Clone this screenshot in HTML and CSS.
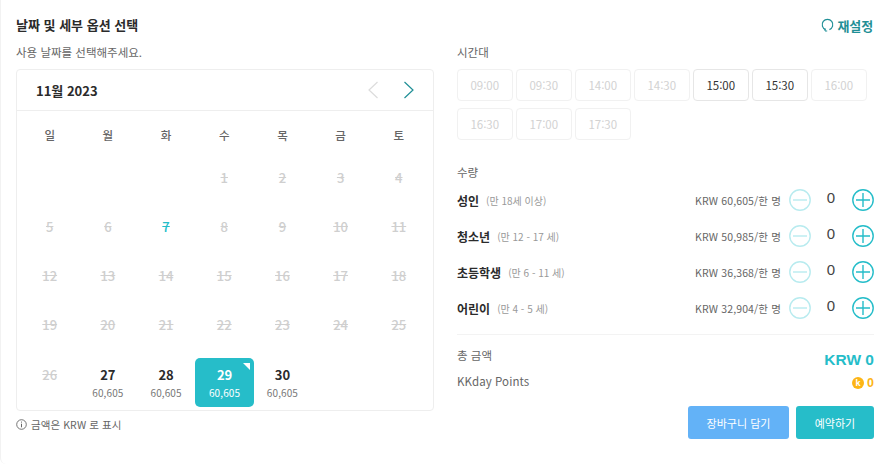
FILE: index.html
```html
<!DOCTYPE html>
<html lang="ko">
<head>
<meta charset="utf-8">
<title>날짜 및 세부 옵션 선택</title>
<link rel="stylesheet" href="styles.css">
</head>
<body>
<main class="panel">
  <header class="top">
    <h1 class="title">날짜 및 세부 옵션 선택</h1>
    <a class="reset">
      <svg width="13" height="14" viewBox="0 0 13 14"><path d="M4.600 11.600A5.300 5.300 0 1 1 8.400 11.600" fill="none" stroke="#1f8f96" stroke-width="1.200"/><path d="M4 10.400v2.600h2.200" fill="none" stroke="#1f8f96" stroke-width="1"/></svg>
      재설정
    </a>
  </header>
  <div class="columns">
    <section class="left">
      <p class="label">사용 날짜를 선택해주세요.</p>
      <div class="calendar">
        <div class="cal-head">
          <span class="month">11월 2023</span>
          <span class="nav">
            <svg width="12" height="18" viewBox="0 0 12 18"><path d="M10.500 1 2 9l8.500 8" fill="none" stroke="#dcdcdc" stroke-width="1.200"/></svg>
            <svg width="12" height="18" viewBox="0 0 12 18"><path d="M1.500 1 10 9l-8.500 8" fill="none" stroke="#1f8f96" stroke-width="1.200"/></svg>
          </span>
        </div>
        <div class="cal-grid">
          <div class="dow">일</div><div class="dow">월</div><div class="dow">화</div><div class="dow">수</div><div class="dow">목</div><div class="dow">금</div><div class="dow">토</div>
          <div class="day"></div><div class="day"></div><div class="day"></div>
          <div class="day off">1</div><div class="day off">2</div><div class="day off">3</div><div class="day off">4</div>
          <div class="day off">5</div><div class="day off">6</div><div class="day off today">7</div><div class="day off">8</div><div class="day off">9</div><div class="day off">10</div><div class="day off">11</div>
          <div class="day off">12</div><div class="day off">13</div><div class="day off">14</div><div class="day off">15</div><div class="day off">16</div><div class="day off">17</div><div class="day off">18</div>
          <div class="day off">19</div><div class="day off">20</div><div class="day off">21</div><div class="day off">22</div><div class="day off">23</div><div class="day off">24</div><div class="day off">25</div>
          <div class="day off">26</div>
          <div class="day on">27<small>60,605</small></div>
          <div class="day on">28<small>60,605</small></div>
          <div class="day on selected">29<small>60,605</small></div>
          <div class="day on">30<small>60,605</small></div>
        </div>
      </div>
      <p class="note">
        <svg width="11" height="11" viewBox="0 0 11 11"><circle cx="5.500" cy="5.500" r="4.800" fill="none" stroke="#666" stroke-width="0.900"/><path d="M5.500 4.700v3.600M5.500 2.600v1" stroke="#666" stroke-width="1"/></svg>
        금액은 KRW 로 표시
      </p>
    </section>
    <section class="right">
      <p class="label">시간대</p>
      <div class="times">
        <button class="time">09:00</button><button class="time">09:30</button><button class="time">14:00</button><button class="time">14:30</button><button class="time open">15:00</button><button class="time open">15:30</button><button class="time">16:00</button>
        <button class="time">16:30</button><button class="time">17:00</button><button class="time">17:30</button>
      </div>
      <p class="label qty-label">수량</p>
      <div class="rows">
        <div class="row"><span class="who">성인</span><span class="age">(만 18세 이상)</span><span class="price">KRW 60,605/한 명</span>
          <svg class="btn minus" viewBox="0 0 22 22"><circle cx="11" cy="11" r="10.200"/><path d="M4 11h14"/></svg><span class="count">0</span>
          <svg class="btn plus" viewBox="0 0 22 22"><circle cx="11" cy="11" r="10.200"/><path d="M4 11h14M11 4v14"/></svg></div>
        <div class="row"><span class="who">청소년</span><span class="age">(만 12 - 17 세)</span><span class="price">KRW 50,985/한 명</span>
          <svg class="btn minus" viewBox="0 0 22 22"><circle cx="11" cy="11" r="10.200"/><path d="M4 11h14"/></svg><span class="count">0</span>
          <svg class="btn plus" viewBox="0 0 22 22"><circle cx="11" cy="11" r="10.200"/><path d="M4 11h14M11 4v14"/></svg></div>
        <div class="row"><span class="who">초등학생</span><span class="age">(만 6 - 11 세)</span><span class="price">KRW 36,368/한 명</span>
          <svg class="btn minus" viewBox="0 0 22 22"><circle cx="11" cy="11" r="10.200"/><path d="M4 11h14"/></svg><span class="count">0</span>
          <svg class="btn plus" viewBox="0 0 22 22"><circle cx="11" cy="11" r="10.200"/><path d="M4 11h14M11 4v14"/></svg></div>
        <div class="row"><span class="who">어린이</span><span class="age">(만 4 - 5 세)</span><span class="price">KRW 32,904/한 명</span>
          <svg class="btn minus" viewBox="0 0 22 22"><circle cx="11" cy="11" r="10.200"/><path d="M4 11h14"/></svg><span class="count">0</span>
          <svg class="btn plus" viewBox="0 0 22 22"><circle cx="11" cy="11" r="10.200"/><path d="M4 11h14M11 4v14"/></svg></div>
      </div>
      <div class="totals">
        <div class="total-row"><span class="label-sm">총 금액</span><span class="amount">KRW 0</span></div>
        <div class="points-row"><span class="points-label">KKday Points</span><span class="points"><span class="coin">k</span>0</span></div>
      </div>
      <div class="actions">
        <button class="action cart">장바구니 담기</button>
        <button class="action book">예약하기</button>
      </div>
    </section>
  </div>
</main>
</body>
</html>
```
FILE: styles.css
```css
* { box-sizing: border-box; }
html, body { margin: 0; padding: 0; background: #fff; }
body {
  width: 886px;
  height: 464px;
  overflow: hidden;
  font-family: "Noto Sans CJK KR", "Noto Sans", sans-serif;
  color: #333;
}
p, h1 { margin: 0; }
.panel {
  height: 464px;
  padding: 15px 12px 0 15px;
  border-left: 1px solid #f2f2f2;
  border-radius: 0 0 0 6px;
}
.top {
  display: flex;
  justify-content: space-between;
  align-items: center;
  height: 20px;
}
.title { font-size: 13px; font-weight: 700; color: #2b2b2b; line-height: 20px; }
.reset {
  display: flex;
  align-items: center;
  gap: 3px;
  font-size: 13px;
  font-weight: 700;
  color: #1f8f96;
  padding-right: 1px;
  letter-spacing: -0.100px;
}
.columns { display: flex; gap: 23px; }
.left { width: 418px; flex: none; padding-top: 7px; }
.right { width: 417px; flex: none; padding-top: 7px; }
.label { font-size: 11.500px; line-height: 20px; color: #666; }
.calendar {
  margin-top: 7px;
  height: 342px;
  border: 1px solid #eee;
  border-radius: 4px;
}
.cal-head {
  height: 41px;
  border-bottom: 1px solid #eee;
  display: flex;
  align-items: center;
  justify-content: space-between;
  padding: 0 18px 0 19px;
}
.month { font-size: 13px; font-weight: 700; color: #2b2b2b; }
.nav { display: flex; gap: 24px; }
.nav svg { display: block; }
.cal-grid {
  display: grid;
  grid-template-columns: repeat(7, 58.200px);
  grid-template-rows: 50px 49px 49px 49px 50px 49px;
  padding-left: 3.600px;
}
.dow {
  display: flex;
  align-items: center;
  justify-content: center;
  font-size: 11.500px;
  font-weight: 500;
  color: #666;
  padding-bottom: 2px;
}
.day {
  position: relative;
  display: flex;
  flex-direction: column;
  align-items: center;
  padding-top: 8px;
  font-size: 13px;
  line-height: 18px;
}
.off { color: #cfcfcf; text-decoration: line-through; font-weight: 500; }
.today { color: #25bdc9; }
.on { font-weight: 700; color: #2b2b2b; }
.on small { font-size: 10px; font-weight: 400; line-height: 14px; color: #777; margin-top: 2px; letter-spacing: 0.100px; }
.selected {
  background: #26bdc9;
  color: #fff;
  border-radius: 5px;
  margin-right: -0.600px;
}
.selected small { color: #fff; }
.selected::after {
  content: "";
  position: absolute;
  top: 5px;
  right: 4px;
  border-top: 7px solid #fff;
  border-left: 7px solid transparent;
}
.note {
  display: flex;
  align-items: center;
  gap: 4px;
  margin-top: 3px;
  height: 20px;
  font-size: 10.500px;
  color: #666;
  letter-spacing: 0.080px;
}
.times {
  margin-top: 7px;
  display: grid;
  grid-template-columns: repeat(7, 55.500px);
  grid-auto-rows: 32px;
  column-gap: 3.500px;
  row-gap: 7px;
}
.time {
  padding: 0;
  background: #fff;
  border: 1px solid #f1f1f1;
  border-radius: 4px;
  font-family: inherit;
  font-size: 11.500px;
  color: #d2d2d2;
}
.open { border-color: #e6e6e6; color: #333; }
.qty-label { margin-top: 22px; }
.rows { display: flex; flex-direction: column; }
.row { display: flex; align-items: center; height: 36px; }
.who { font-size: 12px; font-weight: 700; color: #2b2b2b; }
.age { font-size: 10px; color: #999; margin-left: 7px; }
.price { margin-left: auto; font-size: 10.500px; color: #666; letter-spacing: 0.130px; }
.btn {
  width: 22px;
  height: 22px;
  flex: none;
  margin-left: 8px;
  fill: none;
  stroke: #25bdc9;
  stroke-width: 1.400;
}
.minus { stroke: #b8ebef; }
.count {
  width: 24px;
  margin: -5px 0 0 8px;
  text-align: center;
  font-family: "Liberation Sans", sans-serif;
  font-size: 15px;
  color: #444;
}
.count + .btn { margin-left: 9px; }
.totals { margin-top: 8px; border-top: 1px solid #f3f3f3; padding-top: 10px; }
.total-row { display: flex; justify-content: space-between; align-items: flex-start; height: 26px; }
.label-sm { font-size: 11.500px; line-height: 20px; color: #666; }
.amount { font-family: "Liberation Sans", sans-serif; font-size: 15.500px; font-weight: 700; color: #25bdc9; line-height: 18px; margin-top: 6px; }
.points-row { display: flex; justify-content: space-between; align-items: center; height: 20px; }
.points-label { font-size: 11.500px; color: #666; letter-spacing: 0.080px; }
.points { display: flex; align-items: center; gap: 3px; font-family: "Liberation Sans", sans-serif; font-size: 12.500px; font-weight: 700; color: #fdb515; margin-top: 3px; }
.coin { width: 12px; height: 12px; border-radius: 50%; background: #fdb515; color: #fff; font-size: 9px; line-height: 12px; text-align: center; }
.actions { display: flex; justify-content: flex-end; gap: 7px; margin-top: 15px; }
.action {
  height: 33px;
  border: 0;
  border-radius: 3px;
  font-family: inherit;
  font-size: 11px;
  color: #fff;
  padding: 0;
}
.cart { width: 101px; background: #63b2f7; }
.book { width: 78px; background: #26bdc9; }
```
